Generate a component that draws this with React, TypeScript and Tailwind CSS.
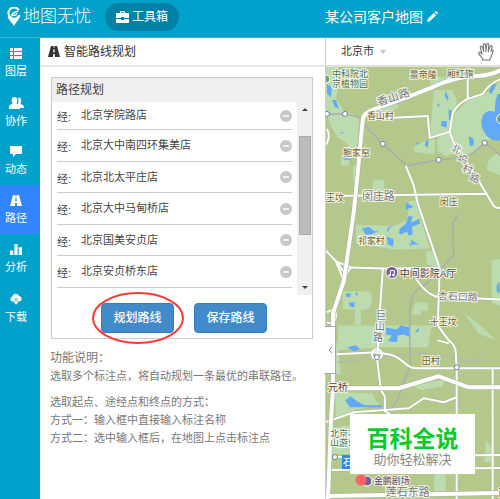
import { Minus } from "lucide-react";
import clsx from "clsx";
import { useState, type ReactNode } from "react";

type IconProps = { className?: string };

function RoadIcon({ className }: IconProps) {
  return (
    <svg viewBox="0 0 12 11" className={className} fill="currentColor" aria-hidden="true">
      <path fillRule="evenodd" d="M3 0h2.500v1.800h1V0H9l3 11H7.100l-.3-3H5.200l-.3 3H0zM5.400 3.200 5.200 6.200h1.600l-.2-3z" />
    </svg>
  );
}

function ListIcon({ className }: IconProps) {
  return (
    <svg viewBox="0 0 12 11" className={className} fill="currentColor" aria-hidden="true">
      <path d="M0 0h3v3H0zM4 0h8v3H4zM0 4h3v3H0zM4 4h8v3H4zM0 8h3v3H0zM4 8h8v3H4z" />
    </svg>
  );
}

function UsersIcon({ className }: IconProps) {
  return (
    <svg viewBox="0 0 15 12" className={className} fill="currentColor" aria-hidden="true">
      <path d="M9.500.6c1.800 0 2.800 1.200 2.700 3-.1 1.500-.7 2.200-.7 2.900 0 .8 3.500 1.300 3.500 3.500v1h-3.200c-.3-1.500-2.200-2.300-3.300-2.700C8.900 7.500 10 4 9.200 1.900z" />
      <path d="M5.500 0c2 0 3 1.300 2.900 3.200-.1 1.600-.8 2.300-.8 3 0 1 3.700 1.400 3.700 3.800v2H0v-2c0-2.400 3.500-2.800 3.500-3.800 0-.7-.8-1.400-.9-3C2.500 1.300 3.500 0 5.500 0z" />
    </svg>
  );
}

function CommentIcon({ className }: IconProps) {
  return (
    <svg viewBox="0 0 12 11" className={className} fill="currentColor" aria-hidden="true">
      <path d="M1 0h10a1 1 0 0 1 1 1v6a1 1 0 0 1-1 1H6l-3 3V8H1a1 1 0 0 1-1-1V1a1 1 0 0 1 1-1z" />
    </svg>
  );
}

function ChartIcon({ className }: IconProps) {
  return (
    <svg viewBox="0 0 11 10" className={className} fill="currentColor" aria-hidden="true">
      <path d="M0 6h3v4H0zM4 0h3v10H4zM8 3h3v7H8z" />
    </svg>
  );
}

function CloudIcon({ className }: IconProps) {
  return (
    <svg viewBox="0 0 12 12" className={className} fill="currentColor" aria-hidden="true">
      <path d="M2.300 8.500A2.300 2.300 0 0 1 2 4 3.800 3.800 0 0 1 9.200 3 2.800 2.800 0 0 1 9.500 8.500H7.300V5.500H4.700v3z" />
      <path d="M5.300 6.200h1.400v2.600h1.900L6 11.800 3.400 8.800h1.900z" />
    </svg>
  );
}

function LogoIcon({ className }: IconProps) {
  return (
    <svg viewBox="0 0 14 19" className={className} aria-hidden="true">
      <path d="M11.800 3.200A5.600 5.600 0 1 0 12.300 8" fill="none" stroke="#fff" strokeWidth="2" />
      <path d="M.6 9C3 12.500 11 12.500 13.400 7.500 13.600 11.500 9.500 14 7 19 4.500 15 1 12.500.6 9z" fill="#fff" />
      <path d="M4.700 9.500C4.500 6.500 7 5 11 4.500M5 8.300h2.500c1.500 0 2-1 2.300-2" fill="none" stroke="#fff" strokeWidth="1.400" />
    </svg>
  );
}

function BriefcaseIcon({ className }: IconProps) {
  return (
    <svg viewBox="0 0 13 12" className={className} fill="currentColor" aria-hidden="true">
      <path d="M4 2V1a1 1 0 0 1 1-1h3a1 1 0 0 1 1 1v1h3a1 1 0 0 1 1 1v4H8V6H5v1H0V3a1 1 0 0 1 1-1zM5.200 2h2.600V1.200H5.200zM0 8h5v1h3V8h5v3a1 1 0 0 1-1 1H1a1 1 0 0 1-1-1z" />
    </svg>
  );
}

function PencilIcon({ className }: IconProps) {
  return (
    <svg viewBox="0 0 12 12" className={className} fill="currentColor" aria-hidden="true">
      <path d="M0 12l.8-3.200 6.600-6.600 2.400 2.400-6.600 6.600zM8.200 1.400 9.400.3a.8.8 0 0 1 1.100 0l1.200 1.200a.8.8 0 0 1 0 1.100l-1.100 1.200z" />
    </svg>
  );
}

function HandIcon({ className }: IconProps) {
  return (
    <svg viewBox="0 0 16 18" className={className} fill="#fff" stroke="#777" strokeWidth="1.100" strokeLinejoin="round" aria-hidden="true">
      <path d="M4.600 17v-1.500C3.500 14 2 12.500.8 10.600c-.6-1 .7-2 1.700-1.100l1.600 1.600L2.300 4.600c-.3-1.400 1.500-1.800 2-.5L5.700 7.500 5.300 2c0-1.400 1.900-1.500 2.100-.1L8 7l.8-5.600c.2-1.300 2-1.100 1.900.3L10.400 7.500l1.900-4.200c.6-1.200 2.200-.5 1.800.8l-1.200 4.400c.5-.8 1-1.500 1.500-1.500.9 0 1 .9.700 1.600-1.200 2.600-1.500 5.200-3 7.100V17z" />
      <path d="M5.700 7.500v1.500M8 7v2M10.400 7.500v1.700" fill="none" />
    </svg>
  );
}

type NavItem = { label: string; icon: ReactNode };

const navItems: NavItem[] = [
  { label: "图层", icon: <ListIcon className="h-[11px] w-3" /> },
  { label: "协作", icon: <UsersIcon className="h-3 w-[15px]" /> },
  { label: "动态", icon: <CommentIcon className="h-[11px] w-3" /> },
  { label: "路径", icon: <RoadIcon className="h-[11px] w-3" /> },
  { label: "分析", icon: <ChartIcon className="h-[11px] w-3" /> },
  { label: "下载", icon: <CloudIcon className="h-3 w-3" /> },
];

const initialStops = [
  "北京学院路店",
  "北京大中南四环集美店",
  "北京北太平庄店",
  "北京大中马甸桥店",
  "北京国美安贞店",
  "北京安贞桥东店",
];

function Header() {
  return (
    <header className="flex h-[38px] shrink-0 items-center border-b border-[#35b5d8] bg-[#00a1cb] pb-1 text-white">
      <a href="#home" className="flex items-center gap-0.5 pl-[7px] text-[17px] leading-6 font-light">
        <LogoIcon className="h-[19px] w-3.5" />
        地图无忧
      </a>
      <button type="button" className="ml-3.5 flex h-7 w-[74px] items-center justify-center gap-[3px] rounded-full bg-[#0082a6] text-xs">
        <BriefcaseIcon className="h-3 w-[13px]" />
        工具箱
      </button>
      <h1 className="ml-auto text-sm">某公司客户地图</h1>
      <button type="button" aria-label="编辑" className="mr-[62px] ml-1">
        <PencilIcon className="h-[11px] w-[11px]" />
      </button>
    </header>
  );
}

function Sidebar() {
  const [active, setActive] = useState("路径");

  return (
    <nav className="w-10 shrink-0 bg-[#00a1cb] text-white">
      {navItems.map((item) => (
        <button
          key={item.label}
          type="button"
          onClick={() => setActive(item.label)}
          className={clsx(
            "flex h-[49px] w-full flex-col items-center gap-1 pt-2.5 pr-2 text-[11px] leading-4",
            active === item.label && "bg-[#3385ff]",
          )}
        >
          {item.icon}
          {item.label}
        </button>
      ))}
    </nav>
  );
}

function RoutePanel() {
  const [stops, setStops] = useState(initialStops);

  return (
    <section className="w-[285px] shrink-0 bg-white">
      <h2 className="flex h-[29px] items-center gap-1 border-b-2 border-[#e8e8e8] pl-2 text-xs text-[#333]">
        <RoadIcon className="h-[11px] w-3" />
        智能路线规划
      </h2>

      <div className="mt-2.5 mr-3 ml-[11px] border border-[#ccc]">
        <h3 className="h-6 bg-[#efefef] px-1 text-xs leading-6 text-[#444]">路径规划</h3>
        <div className="flex h-[193px]">
          <ul className="flex-1 overflow-hidden pr-[5px] pl-[5px] text-[11px] text-[#444]">
            {stops.map((stop, i) => (
              <li key={stop} className="flex h-[31px] items-center border-b border-[#ccc] first:h-7 even:h-8">
                <label htmlFor={`stop-${i}`} className="w-6 pt-1">
                  经:
                </label>
                <input id={`stop-${i}`} defaultValue={stop} className="min-w-0 flex-1 bg-transparent outline-none" />
                <button
                  type="button"
                  aria-label={`删除${stop}`}
                  onClick={() => setStops(stops.filter((s) => s !== stop))}
                  className="flex h-3 w-3 items-center justify-center rounded-full bg-[#c8c8c8] text-white"
                >
                  <Minus size={8} strokeWidth={5} />
                </button>
              </li>
            ))}
          </ul>
          <div className="flex w-[15px] flex-col items-center bg-[#f0f0f0]" aria-hidden="true">
            <svg viewBox="0 0 6 3" className="mt-1.5 h-[3px] w-1.5 fill-[#444]">
              <path d="M3 0 6 3H0z" />
            </svg>
            <div className="mt-[25px] h-[99px] w-3 border border-[#aaa] bg-[#bbb]" />
            <svg viewBox="0 0 6 3" className="mt-auto mb-1.5 h-[3px] w-1.5 fill-[#444]">
              <path d="M0 0h6L3 3z" />
            </svg>
          </div>
        </div>

        <div className="flex gap-5 pt-2 pb-[5px] pl-[49px] text-xs font-medium text-white">
          <div className="relative">
            <button type="button" className="h-[30px] w-[73px] rounded-sm border border-[#357ebd] bg-[#428bca]">
              规划路线
            </button>
            <svg viewBox="0 0 94 54" className="pointer-events-none absolute -top-3 -left-2.5 h-[54px] w-[94px]" aria-hidden="true">
              <ellipse cx="47" cy="27" rx="45" ry="25" fill="none" stroke="#f43b3b" strokeWidth="2" />
            </svg>
          </div>
          <button type="button" className="h-[30px] w-[73px] rounded-sm border border-[#357ebd] bg-[#428bca]">
            保存路线
          </button>
        </div>
      </div>

      <div className="pt-2.5 pr-3 pl-2.5 text-[11px] leading-[18px] text-[#777]">
        <h4 className="text-xs leading-[18px]">功能说明：</h4>
        <p>选取多个标注点，将自动规划一条最优的串联路径。</p>
        <p className="mt-2">选取起点、途经点和终点的方式：</p>
        <p>方式一：输入框中直接输入标注名称</p>
        <p>方式二：选中输入框后，在地图上点击标注点</p>
      </div>
    </section>
  );
}

type MapLabel = { text: string; x: number; y: number; size?: number; rotate?: number; className?: string };

const placeLabels: MapLabel[] = [
  { text: "中科院北", x: 331, y: 76, className: "fill-[#4c7350]" },
  { text: "京植物园", x: 331, y: 86, className: "fill-[#4c7350]" },
  { text: "景帝陵", x: 409, y: 77 },
  { text: "厢红旗", x: 446, y: 76 },
  { text: "香山村", x: 366, y: 118 },
  { text: "鲍家窑", x: 342, y: 155 },
  { text: "王坟", x: 325, y: 200 },
  { text: "闵庄", x: 439, y: 204 },
  { text: "祁家村", x: 357, y: 243 },
  { text: "十王坟", x: 429, y: 325 },
  { text: "田村", x: 421, y: 364 },
  { text: "元桥", x: 327, y: 391, size: 10, className: "fill-[#713c16]" },
  { text: "北京石景", x: 329, y: 437, className: "fill-[#4c7350]" },
  { text: "山游乐园", x: 329, y: 446, className: "fill-[#4c7350]" },
  { text: "中间影院A厅", x: 399, y: 276, size: 10, className: "fill-[#444]" },
  { text: "金鹏剧场", x: 373, y: 484, className: "fill-[#66465a]" },
  { text: "西", x: 498, y: 496, className: "fill-[#713c16]" },
];

const roadLabels: MapLabel[] = [
  { text: "香山路", x: 378, y: 105, size: 11, rotate: -18 },
  { text: "闵庄路", x: 361, y: 199, size: 11 },
  { text: "杏石口路", x: 437, y: 299, size: 10, rotate: 2 },
  { text: "莲石东路", x: 385, y: 496, size: 11 },
  { text: "北", x: 450, y: 150, size: 10, rotate: 20 },
  { text: "坞", x: 456, y: 160, size: 10, rotate: 20 },
  { text: "村", x: 461, y: 170, size: 10, rotate: 20 },
  { text: "路", x: 468, y: 179, size: 10, rotate: 20 },
  { text: "巨", x: 375, y: 319, size: 10 },
  { text: "山", x: 374, y: 330, size: 10 },
  { text: "路", x: 372, y: 341, size: 10 },
];

const stations = [
  [326, 113],
  [344, 113],
  [382, 143],
  [438, 159],
  [484, 142],
  [376, 357],
  [456, 367],
  [334, 457],
];

const highways =
  "M500 69Q492 74 476 75 452 76 430 87L410 95 377 107Q363 111 362 118L360 137 357 170 353 210 343 280 332 313V388L330 420 327 499M337 388H398L438 376 468 387H500M327 496L385 495 500 493";

const roads = [
  "M367 118L427 115 429 137 449 131 452 112Q458 102 467 98L482 93Q488 83 500 78M467 98V76",
  "M449 131L453 142 478 180 493 205Q496 208 500 207M326 196L347 195 487 193",
  "M405 165L413 185 417 203 433 250 439 268 437 325 448 340Q455 345 455 352L456 367V499",
  "M325 250L337 263 343 272M350 267L382 268H439M382 268L379 310 377 350 376 357 380 390 384 396V411L400 421",
  "M415 278Q425 293 435 296L500 299M325 144Q330 136 326 128M437 340L448 343",
  "M336 354L376 352 387 354Q395 355 403 362 409 368 415 368H500",
  "M325 422L353 412 408 408 423 398 443 402 456 397M326 457L500 455M327 470L500 468M492 368V499",
  "M335 261L350 267 342 278ZM326 312Q335 306 335 316 333 325 326 322",
];

function MapText({ label, fill }: { label: MapLabel; fill: string }) {
  return (
    <text
      x={label.x}
      y={label.y}
      fontSize={label.size ?? 9}
      transform={label.rotate ? `rotate(${label.rotate} ${label.x} ${label.y})` : undefined}
      className={label.className ?? fill}
      stroke="#fff"
      strokeOpacity="0.8"
      strokeWidth="2"
      paintOrder="stroke"
    >
      {label.text}
    </text>
  );
}

function CityMap() {
  return (
    <svg viewBox="325 66 175 433" preserveAspectRatio="xMinYMin slice" className="absolute inset-0 h-full w-full" role="img" aria-label="北京市地图">
      <rect x="325" y="66" width="175" height="433" fill="#b4c88c" />

      {/* parks */}
      <g fill="#bcdcb0">
        <path d="M325 66h12v22l-2 10 8 12 10 4 5 4-1 22-4 15-8-13-9-6-7-12-4-13z" />
        <path d="M375 107l20-7 3 7-17 5zM433 89l19 0 4 10-1 12-4 22-22 5zM430 76h14v7l-14 3z" />
        <path d="M453 114l14-15 16-5 17-14v57l-15 3-15 14-17-2-8 4-8-6-1-12 13-8z" />
        <path d="M419 142l15-4v16l-21-3v-5zM340 155h8v10h-8zM372 179h11v12h-11zM488 159l8-6 4 3v19l-14-6zM352 165h4l-1 16h-3z" />
        <path d="M355 224l38 1 14-6 1-19 7 0 7 25 7 23-36 1-38-6zM425 251l8 0 5 17-12-4zM491 260l9-2v48l-9-4z" />
        <path d="M342 291h27q5 7-1 17l-8 2v14h-6v-15h-12zM414 302h13v8h-6l-1 4h-9z" />
        <path d="M337 325h94l-4 22h-46l-44 3zM463 312l20 16 12 12-17-7z" />
        <path d="M334 392l37 1 7 12-25 5-18 7zM412 386l32-7-2 7-22 4zM328 428l27-4v30h-27zM434 473h11v21h-12zM485 440l6 8v14h-7zM336 340l4 34h-13z" />
      </g>

      {/* water */}
      <g fill="#62a9f8">
        <path d="M326 83l5 3 -1 10-4-3zM331 99l4 0 3 9-4-2zM445 90l3 7-1 3-3-5zM448 108l3 2-1 10-2-2zM441 120l5 0 0 7-6-2zM436 104l2-2 1 4zM492 83l4 0-5 10-3-2z" />
        <path d="M497 93l3 0v46q-7 3-14-4-8-10-4-20 4-7 12-4l1-12zM468 136q6 0 5 7-1 4-4 1zM425 140l3 0-1 7-3-2zM340 157l9 1 3 1-8 0zM415 142l5 1-5 1zM340 131l3 1-3 1z" />
        <path d="M405 202l8 4-8 3zM361 228l7-2 6 5 5-1-9 4-5 0zM386 231q0-6 8-7-5 1-7 7zM399 228l6-5 3-8 4 1-2 6 9-4v5l-8 3 1 8-4 1-2-4-6 3-2-1zM386 236l7 3-1 7-5-2zM410 239l8 5-7 0zM409 242l3 3h-3z" />
        <path d="M345 293l5 0-1 4-4-1zM348 302l6 0-1 5-4-1zM356 291l1 4-3-1zM385 327l11 2 4-4 9 2v10l-6-3-6 1-1 7-9-1 4-6-6-1zM414 331l5-4-2 5zM346 347l9-2 4 4-6 2zM496 285l3-4v12l-3-2zM344 400l6-4 6 5 8 4h17v2l-32 0z" />
      </g>

      {/* railways */}
      <g fill="none" stroke="#a8aeaf" strokeWidth="1.500" strokeLinejoin="round">
        <path d="M325 113L344 113 360 117 367 128 382 143 406 165 438 159 463 157Q473 153 484 142 492 147 500 155" />
        <path d="M457 214L452 223 453 255 442 267 427 282Q415 289 412 295L409 307V365L400 390Q397 403 390 408" />
        <path d="M336 362L376 357 420 353Q445 354 472 362M472 362l10-6" stroke="#b6bbb0" />
      </g>

      {/* roads */}
      <g fill="none" stroke="#a3ab98" strokeWidth="3" strokeLinejoin="round">
        {roads.map((d) => (
          <path key={d} d={d} strokeOpacity="0.5" />
        ))}
      </g>
      <g fill="none" stroke="#fff" strokeWidth="2" strokeLinejoin="round">
        {roads.map((d) => (
          <path key={d} d={d} />
        ))}
        <circle cx="376" cy="354" r="5" />
      </g>
      <g fill="none" strokeLinejoin="round">
        <path d={highways} stroke="#a9b0a0" strokeWidth="5" />
        <path d={highways} stroke="#fff" strokeWidth="4" />
      </g>

      {stations.map(([x, y]) => (
        <circle key={`${x}-${y}`} cx={x} cy={y} r="2.500" fill="#fff" stroke="#718096" strokeWidth="1" />
      ))}

      {placeLabels.map((label) => (
        <MapText key={`${label.x}-${label.y}`} label={label} fill="fill-[#756024]" />
      ))}
      {roadLabels.map((label) => (
        <MapText key={`${label.x}-${label.y}`} label={label} fill="fill-[#777]" />
      ))}

      {/* points of interest */}
      <circle cx="391" cy="272" r="6" fill="#775d9b" stroke="#fff" strokeWidth="1" />
      <path d="M389.500 275v-5h4v4" fill="none" stroke="#fff" />
      <circle cx="388.500" cy="275" r="1.300" fill="#fff" />
      <circle cx="392.500" cy="274.500" r="1.300" fill="#fff" />
      <circle cx="325" cy="78" r="4" fill="#6fa36f" stroke="#fff" />
      <circle cx="501" cy="118" r="5" fill="#6fa36f" stroke="#fff" />
      <rect x="341" y="455" width="14" height="14" fill="#2b8be0" />
      <text x="342" y="466" fontSize="10" fill="#fff">石</text>
      <circle cx="366" cy="481" r="5" fill="#775d9b" stroke="#fff" />
      <circle cx="360" cy="480" r="5.500" fill="#ff6464" />
    </svg>
  );
}

function MapPanel() {
  return (
    <section className="flex min-w-0 flex-1 flex-col border-l border-[#ccc] bg-white">
      <div className="flex h-[29px] shrink-0 items-center border-b-2 border-[#e0e0e0] pr-1.5 pl-[15px]">
        <button type="button" className="flex items-center gap-1.5 text-[11px] text-[#333]">
          北京市
          <svg viewBox="0 0 6 4" className="h-1 w-1.5 fill-[#c0c4c8]" aria-hidden="true">
            <path d="M0 0h6L3 4z" />
          </svg>
        </button>
        <button type="button" aria-label="拖动地图" className="ml-auto">
          <HandIcon className="h-[18px] w-4" />
        </button>
      </div>

      <div className="relative flex-1">
        <CityMap />
        <button
          type="button"
          aria-label="收起面板"
          className="absolute top-[259px] -left-0.5 flex h-12 w-3 items-center justify-center border border-[#aaa] border-l-white bg-white"
        >
          <svg viewBox="0 0 5 8" className="h-2 w-[5px]" fill="none" stroke="#7890b8" aria-hidden="true">
            <path d="M4 1 1 4l3 3" />
          </svg>
        </button>
        <div className="absolute right-[25px] bottom-[25px] flex h-[60px] w-[125px] flex-col items-center bg-white pt-3">
          <strong className="text-[23px] leading-[26px] font-bold text-[#06cb2b]">百科全说</strong>
          <span className="text-[13px] leading-4 text-[#888]">助你轻松解决</span>
        </div>
      </div>
    </section>
  );
}

export default function App() {
  return (
    <div className="flex min-h-screen flex-col bg-white font-['Liberation_Sans','Noto_Sans_CJK_SC',sans-serif]">
      <Header />
      <main className="flex flex-1">
        <Sidebar />
        <RoutePanel />
        <MapPanel />
      </main>
    </div>
  );
}
